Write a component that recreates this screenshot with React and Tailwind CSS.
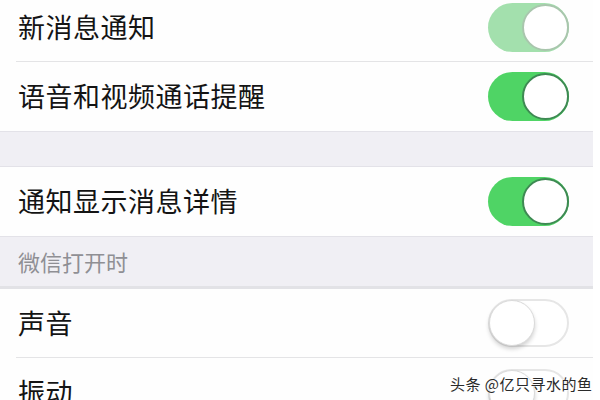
import React from 'react';

const Toggle = ({ state }) => {
  // state: 'faded' | 'on' | 'off'
  if (state === 'off') {
    return (
      <div className="relative w-[81px] h-[48px] rounded-full bg-white border-[2px] border-[#e6e6e6] shrink-0">
        <div className="absolute left-[-1px] top-[-1px] w-[46px] h-[46px] rounded-full bg-white border border-[#dadada] shadow-[0_3px_4px_rgba(0,0,0,0.18)]" />
      </div>
    );
  }
  const faded = state === 'faded';
  return (
    <div
      className={
        'relative w-[81px] h-[49px] rounded-full shrink-0 ' +
        (faded ? 'bg-[#a3e0ad]' : 'bg-[#4fd465]')
      }
    >
      <div
        className={
          'absolute right-0 top-[1px] w-[47px] h-[47px] rounded-full bg-white border-[2px] ' +
          (faded ? 'border-[#a9c6ad]' : 'border-[#3e8a53]')
        }
      />
    </div>
  );
};

const Row = ({ label, state, line = true }) => (
  <div className="h-[69px] shrink-0 pl-[16px] bg-[#fefefe] flex">
    <div className={'flex-1 flex items-center justify-between pl-[2px] pr-[24px] ' + (line ? 'border-b border-[#e4e4e6]' : '')}>
      <span className="text-[27px] text-[#141414] tracking-[0.5px]">{label}</span>
      <Toggle state={state} />
    </div>
  </div>
);

export default function App() {
  return (
    <div
      className="w-[600px] h-[400px] overflow-hidden bg-white relative flex"
      style={{ fontFamily: '"Noto Sans CJK SC", "Noto Sans", sans-serif' }}
    >
      <div className="w-[593px] flex flex-col -mt-[7px]">
        <Row label="新消息通知" state="faded" />
        <Row label="语音和视频通话提醒" state="on" line={false} />
        <div className="h-[36px] shrink-0 bg-[#f0eff4] border-y border-[#e3e2e8]" />
        <Row label="通知显示消息详情" state="on" line={false} />
        <div className="h-[53px] shrink-0 bg-[#f0eff4] border-t border-[#e3e2e8] border-b-[3px] border-b-[#e2e2e6] flex items-center pl-[18px]">
          <span className="text-[22px] text-[#8f8f94]">微信打开时</span>
        </div>
        <Row label="声音" state="off" />
        <Row label="振动" state="off" line={false} />
      </div>
      <div className="absolute left-[450px] top-[373px] text-[15px] text-[#2a2a2a] tracking-[0.5px] [text-shadow:0_0_2px_#fff,0_0_2px_#fff]">
        头条 @亿只寻水的鱼
      </div>
    </div>
  );
}
